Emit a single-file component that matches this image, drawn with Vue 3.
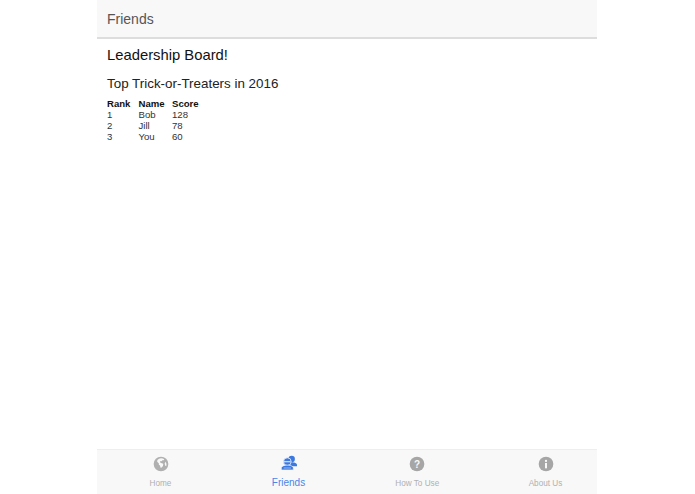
<script setup>
const rows = [
  { rank: 1, name: 'Bob', score: 128 },
  { rank: 2, name: 'Jill', score: 78 },
  { rank: 3, name: 'You', score: 60 },
]
</script>

<template>
  <div class="page">
    <div class="phone">
      <header class="bar">Friends</header>
      <main class="content">
        <h1>Leadership Board!</h1>
        <h2>Top Trick-or-Treaters in 2016</h2>
        <table>
          <thead>
            <tr><th>Rank</th><th>Name</th><th>Score</th></tr>
          </thead>
          <tbody>
            <tr v-for="r in rows" :key="r.rank">
              <td>{{ r.rank }}</td><td>{{ r.name }}</td><td>{{ r.score }}</td>
            </tr>
          </tbody>
        </table>
      </main>
      <nav class="tabs">
        <div class="tab">
          <svg viewBox="0 0 24 24" class="icon"><path fill="#b0b0b0" fill-rule="evenodd" d="M12 1a11 11 0 1 0 0 22 11 11 0 0 0 0-22zm0 2.200c1.900 0 3.600.6 5 1.600l-1 1.400-2 .3-.8 1.500-1.700-.4-1 1.200 1 1.800 2.300.2 1.600 1.300-.5 3-1.800 2.200-1.700.4-.9-3.300-1.800-1.300.2-2-2.600-2.400.3-2.800A8.800 8.800 0 0 1 12 3.200zm7 5.300a8.800 8.800 0 0 1 .9 7l-1.700-1.400-.7-3 1.500-2.600z"/></svg>
          <span>Home</span>
        </div>
        <div class="tab active">
          <svg viewBox="0 0 24 24" class="icon friends"><circle cx="16" cy="6" r="4.800" fill="#3b78e0"/><path fill="#3b78e0" d="M10 12.500c1.700-1 4-1.500 6-1.500 3.500 0 8 1.300 8 3.800V17h-9z"/><circle cx="9.500" cy="10" r="5.800" fill="#3b78e0" stroke="#f8f8f8" stroke-width="1.200"/><path fill="#3b78e0" stroke="#f8f8f8" stroke-width="1" d="M.5 22.500v-3c0-2.800 4.500-4.300 9-4.300s9 1.500 9 4.300v3z"/><path fill="#f8f8f8" d="M4.500 9.500h10v1.300h-10zM4 19h11v1H4z"/></svg>
          <span>Friends</span>
        </div>
        <div class="tab">
          <svg viewBox="0 0 24 24" class="icon"><circle cx="12" cy="12" r="11" fill="#a6a6a6"/><text x="12" y="17.500" class="glyph">?</text></svg>
          <span>How To Use</span>
        </div>
        <div class="tab">
          <svg viewBox="0 0 24 24" class="icon"><circle cx="12" cy="12" r="11" fill="#a6a6a6"/><rect x="10.500" y="10.500" width="3" height="8" fill="#f8f8f8"/><circle cx="12" cy="7.500" r="1.700" fill="#f8f8f8"/></svg>
          <span>About Us</span>
        </div>
      </nav>
    </div>
  </div>
</template>

<style scoped>
.page {
  display: flex;
  padding-left: 97px;
  height: 494px;
  background: #fff;
  font-family: "Liberation Sans", Arial, sans-serif;
}
.phone {
  width: 500px;
  display: flex;
  flex-direction: column;
}
.bar {
  height: 39px;
  box-sizing: border-box;
  padding-left: 10px;
  line-height: 38px;
  font-size: 14px;
  color: #555;
  background: #f8f8f8;
  border-bottom: 2px solid #ddd;
  flex: none;
}
.content {
  flex: 1;
  padding: 0 10px;
  color: #000;
}
h1 {
  margin: 6px 0 0;
  font-size: 14.800px;
  font-weight: 400;
  line-height: 20px;
  color: #111;
}
h2 {
  margin: 9.500px 0 0;
  font-size: 13.400px;
  font-weight: 400;
  line-height: 18px;
  color: #222;
}
table {
  margin-top: 4.500px;
  border-collapse: collapse;
  font-size: 9.600px;
  line-height: 11px;
}
th, td {
  padding: 0;
  text-align: left;
  height: 11px;
}
thead th { height: 12px; }
th:nth-child(1), td:nth-child(1) { width: 31.500px; }
th:nth-child(2), td:nth-child(2) { width: 33.500px; }
th { font-weight: 700; color: #111; }
td { color: #333; }
.tabs {
  flex: none;
  height: 45px;
  display: grid;
  grid-template-columns: 127px 129px 128.500px 128px;
  overflow: hidden;
  background: #f8f8f8;
  border-top: 1px solid #eee;
  box-sizing: border-box;
}
.tab {
  display: flex;
  flex-direction: column;
  align-items: center;
  padding-top: 6px;
  font-size: 8.200px;
  color: #b0b0b0;
}
.tab span { margin-top: 7px; line-height: 10px; }
.icon { width: 16px; height: 16px; display: block; }
.active { color: #4a86e8; padding-top: 5px; font-size: 10px; }
.active span { margin-top: 6px; line-height: 12px; }
.glyph {
  font-size: 15px;
  font-weight: 700;
  text-anchor: middle;
  fill: #f8f8f8;
}
</style>
